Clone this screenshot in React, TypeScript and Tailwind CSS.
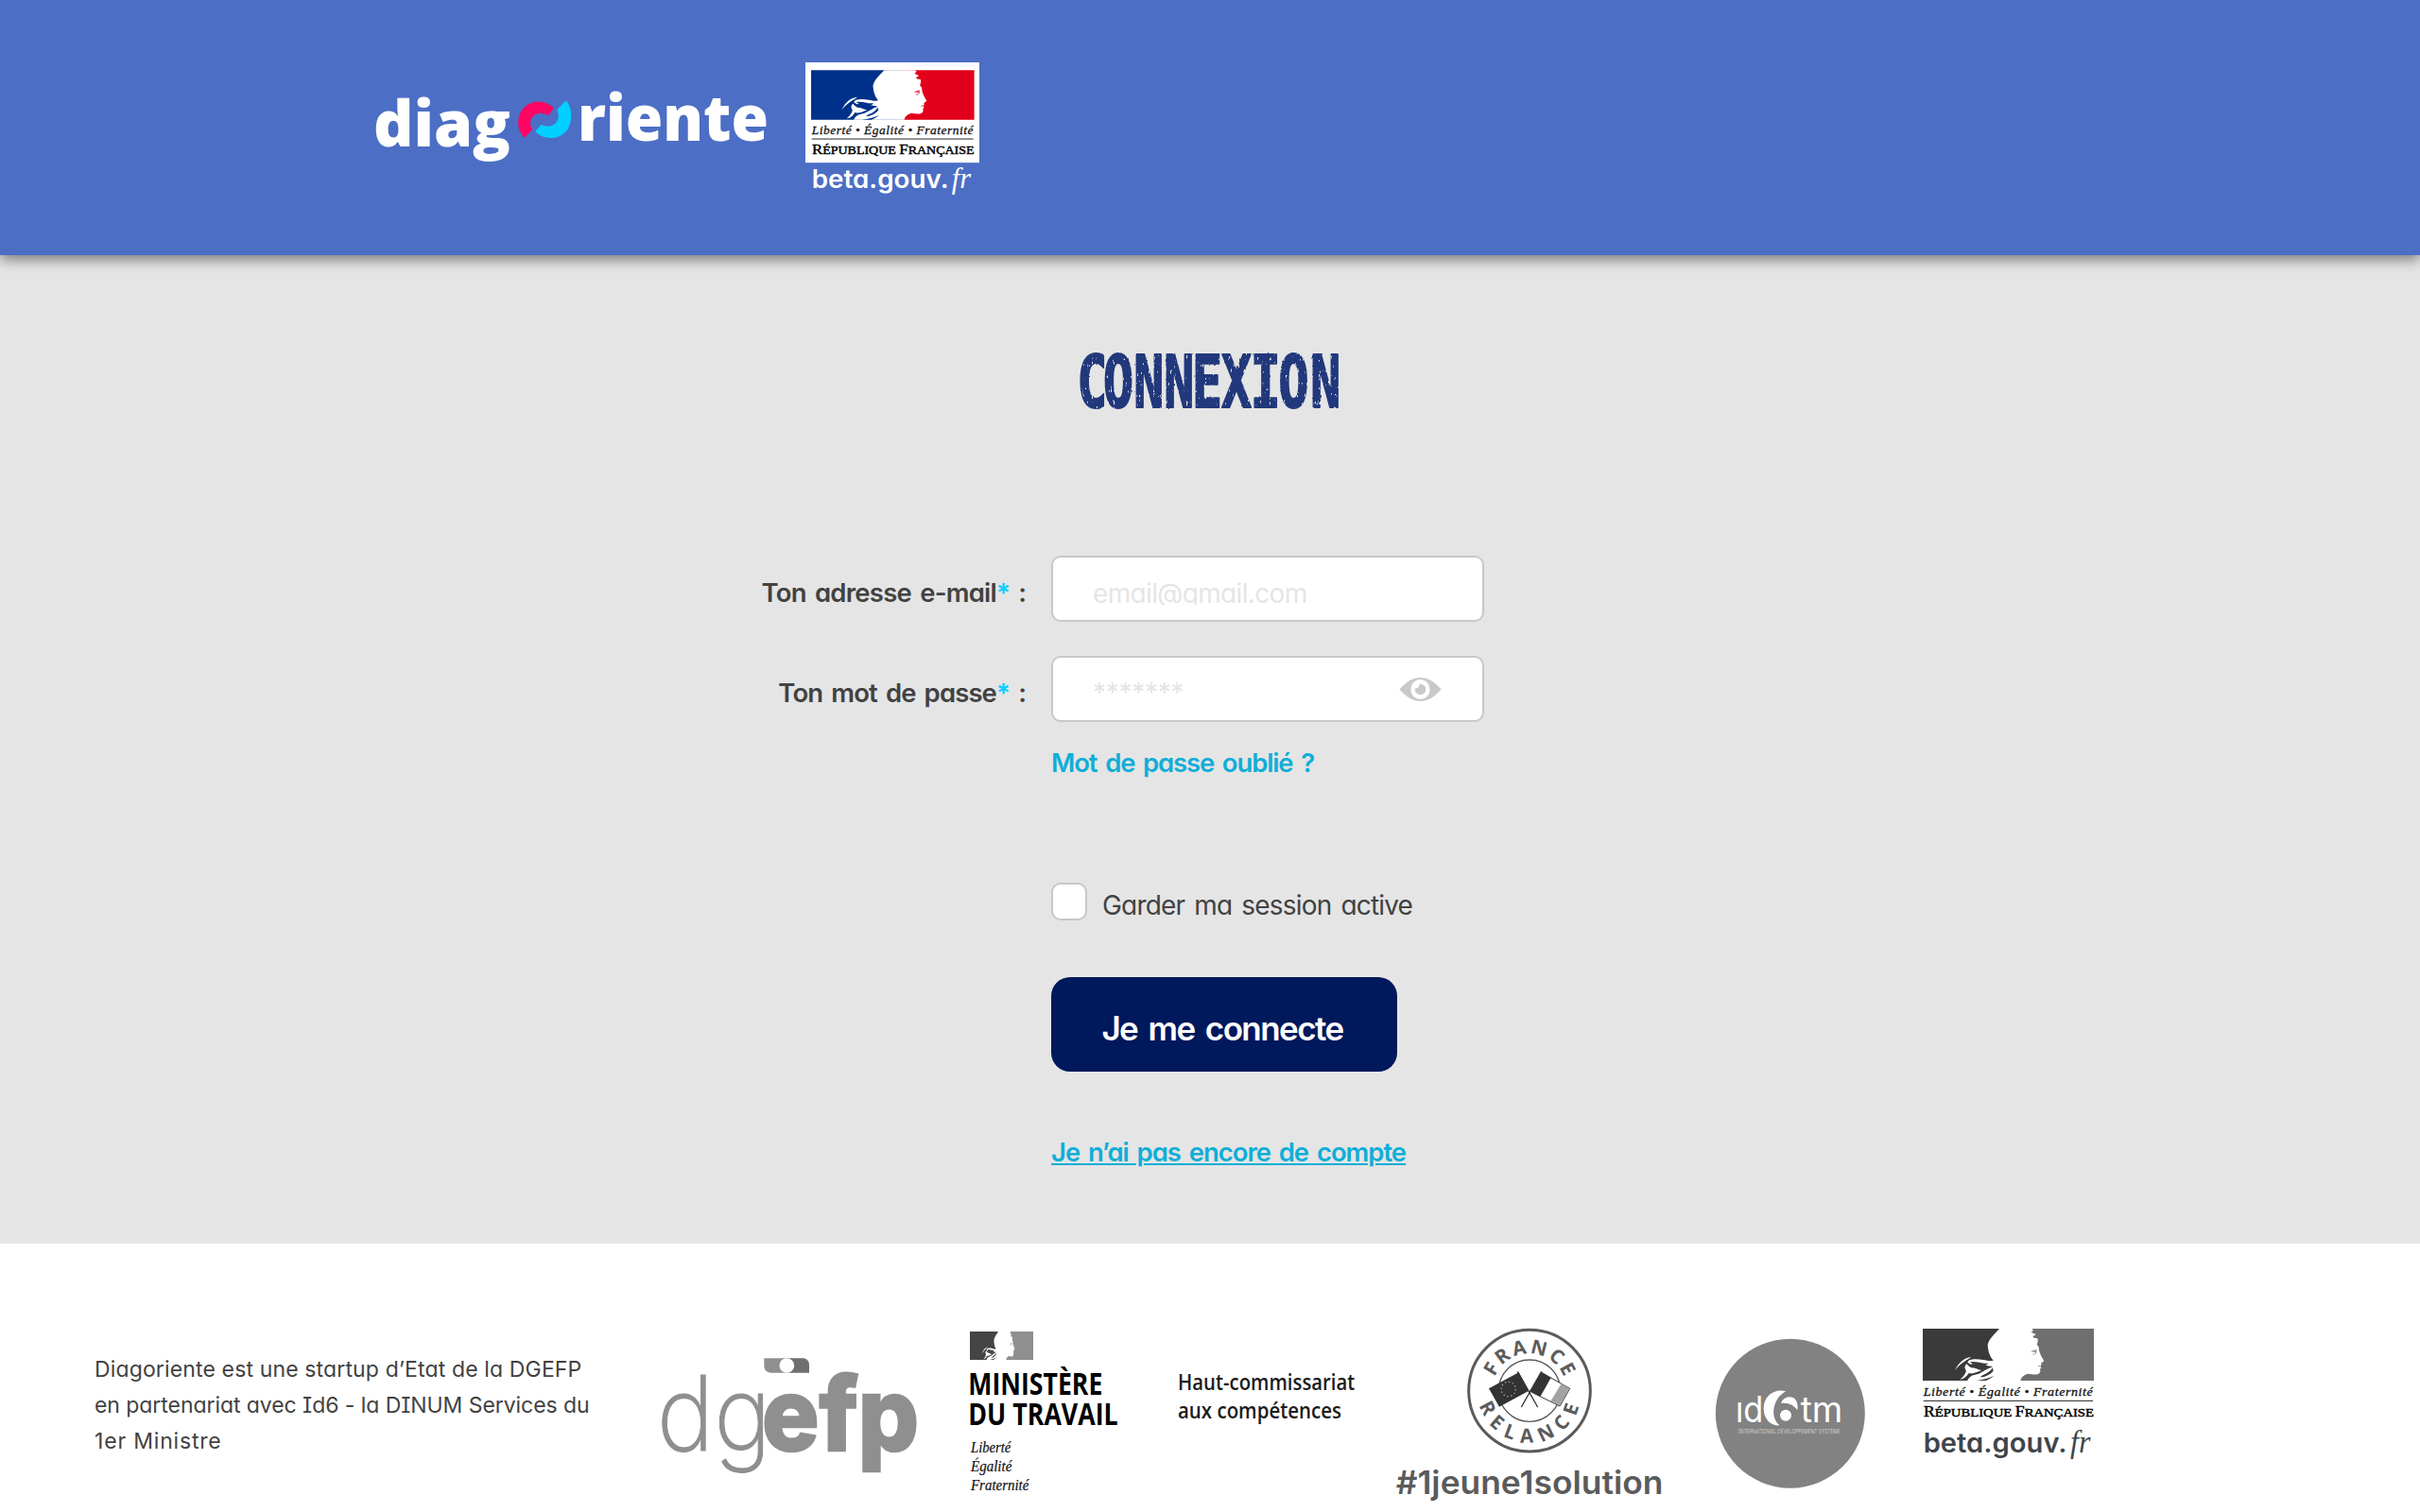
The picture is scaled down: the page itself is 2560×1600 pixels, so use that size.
import type { ReactNode } from "react";

const uiFont =
  "font-[Inter,'Noto_Sans',sans-serif] [font-feature-settings:'cv11','cv08']";

type FlagProps = { left: string; right: string };

/* Marianne profile over a two-tone flag, in a 543 x 165 box. */
function Marianne({ left, right }: FlagProps) {
  return (
    <g>
      <path d="M0 0H300V165H0Z" fill={left} />
      <path d="M300 0H543V165H300Z" fill={right} />
      <path
        d="M243 0C230 16 209 32 206 52C207 72 213 90 224 101C214 104 204 101 192 99C174 96 160 95 147 100L142 107L152 113C166 108 184 112 197 117C206 120 214 117 222 121C204 127 193 136 178 143L160 148C152 150 143 160 142 165H310C314 152 321 147 334 143C346 143 358 148 366 144C374 140 374 134 372 129L376 124L373 119L377 114L375 109C380 106 385 105 384 101C380 93 374 85 372 77C368 70 370 62 367 56L362 50C365 44 367 38 364 31L353 29L349 24L358 20L355 16L344 12L351 5L346 0Z"
        fill="#fff"
      />
      <path
        d="M154 90C132 92 115 106 102 132C112 120 120 112 128 107C136 101 146 96 154 90Z"
        fill="#fff"
      />
      <path
        d="M140 112C130 118 134 128 138 134C134 145 128 154 118 161C132 160 140 150 146 141C158 145 172 138 186 132C174 130 166 124 154 124C148 121 143 117 140 112Z"
        fill="#fff"
      />
      <path
        d="M150 106C170 102 186 112 208 110C200 118 190 124 178 124C166 116 158 112 150 106ZM222 124C214 136 204 143 190 148L182 154C198 154 214 146 224 134ZM170 165C188 163 208 158 226 150C216 158 208 162 200 165Z"
        fill={left}
      />
      <path
        d="M342 74C348 68 356 68 362 66L361 70C362 74 360 78 358 82L356 75C352 73 348 74 342 74ZM348 82L354 78L355 83Z"
        fill={right}
        opacity="0.75"
      />
      <path d="M366 118L376 118L367 121Z" fill={right} />
    </g>
  );
}

type GouvProps = {
  className: string;
  viewBox: string;
  left: string;
  right: string;
  beta: string;
  plate?: boolean;
};

function GouvLogo({ className, viewBox, left, right, beta, plate }: GouvProps) {
  return (
    <svg className={className} viewBox={viewBox}>
      {plate && <rect x="83" y="22" width="579" height="334" fill="#fff" />}
      <g transform="translate(102 48)">
        <Marianne left={left} right={right} />
      </g>
      <text
        x="104"
        y="261"
        textLength="539"
        lengthAdjust="spacingAndGlyphs"
        fontSize="38"
        letterSpacing="1.500"
        fill="#111"
        stroke="#111"
        strokeWidth="0.800"
        className="font-['Liberation_Serif',serif] italic"
      >
        Liberté • Égalité • Fraternité
      </text>
      <rect x="104" y="275.500" width="538" height="3" fill="#222" />
      <text
        x="105"
        y="328"
        textLength="540"
        lengthAdjust="spacingAndGlyphs"
        fontSize="48"
        fill="#000"
        stroke="#000"
        strokeWidth="1.400"
        className="font-['Liberation_Serif',serif]"
      >
        R<tspan fontSize="40">ÉPUBLIQUE </tspan>F
        <tspan fontSize="40">RANÇAISE</tspan>
      </text>
      <text
        x="104"
        y="440"
        textLength="456"
        lengthAdjust="spacingAndGlyphs"
        fontSize="84"
        fill={beta}
        className="font-[Inter,sans-serif] font-semibold [font-feature-settings:'cv11']"
      >
        beta.gouv.
      </text>
      <text
        x="570"
        y="440"
        textLength="64"
        lengthAdjust="spacingAndGlyphs"
        fontSize="98"
        fill={beta}
        className="font-['Liberation_Serif',serif] italic"
      >
        fr
      </text>
    </svg>
  );
}

function DiagorienteLogo() {
  return (
    <svg className="h-[90px] w-[430px] overflow-visible" viewBox="390 90 430 90">
      <g
        fill="#fff"
        fontSize="68"
        className="font-['Open_Sans','Noto_Sans',sans-serif] font-extrabold"
      >
        <text x="395" y="154.500" textLength="145" lengthAdjust="spacingAndGlyphs">
          diag
        </text>
        <text x="611" y="149" textLength="202" lengthAdjust="spacingAndGlyphs">
          riente
        </text>
      </g>
      <g transform="translate(540 96) scale(0.3333)">
        <path
          d="M45 150C20 125 18 85 38 60C62 30 105 25 138 55L120 79C100 65 75 70 66 90C61 103 63 113 70 122Z"
          fill="#ff0563"
        />
        <path
          d="M78 130L98 107C115 118 138 113 148 96C154 84 153 70 148 60L176 31C196 50 198 95 182 122C160 155 110 160 78 130Z"
          fill="#00cfff"
        />
      </g>
    </svg>
  );
}

function Title() {
  return (
    <h1 className="h-[68px]">
      <svg className="h-[68px] w-[280px] overflow-visible" viewBox="0 0 280 68">
        <defs>
          <filter id="brush" x="-5%" y="-20%" width="110%" height="140%">
            <feTurbulence
              type="fractalNoise"
              baseFrequency="0.4 0.15"
              numOctaves="3"
              seed="11"
              result="noise"
            />
            <feColorMatrix
              in="noise"
              type="matrix"
              values="0 0 0 0 0  0 0 0 0 0  0 0 0 0 0  0 0 0 12 -8.400"
              result="specks"
            />
            <feDisplacementMap
              in="SourceGraphic"
              in2="noise"
              scale="2"
              xChannelSelector="G"
              yChannelSelector="B"
              result="rough"
            />
            <feComposite in="rough" in2="specks" operator="out" />
          </filter>
        </defs>
        <g filter="url(#brush)">
          <text
            transform="scale(0.7 1)"
            x="-1 38.500 84.500 130.500 173 217 261 303.500 351.700"
            y="60.500"
            fontSize="76"
            fill="#21397c"
            stroke="#21397c"
            strokeWidth="2.200"
            strokeLinejoin="round"
            className="font-['DejaVu_Sans_Mono',monospace] font-bold"
          >
            CONNEXION
          </text>
        </g>
      </svg>
    </h1>
  );
}

function EyeIcon() {
  return (
    <svg className="h-[25px] w-[45px]" viewBox="0 0 46 26">
      <path d="M0 13C8 4 15 0 23 0S38 4 46 13C38 22 31 26 23 26S8 22 0 13Z" fill="#c9c9c9" />
      <ellipse cx="23" cy="13" rx="10.500" ry="11" fill="#fff" />
      <path d="M23 7A6 6 0 1 1 17 13C17 11.500 18.500 12.500 20.500 11C22 9.500 21.500 7 23 7Z" fill="#c9c9c9" />
    </svg>
  );
}

function Label({ className, children }: { className: string; children: ReactNode }) {
  return (
    <div className="-mr-px flex h-[70px] items-center justify-end pt-2.5 text-[27.500px] font-semibold whitespace-pre text-[#424242]">
      <span className={className}>{children}</span>
      <span className="w-[17px] text-[#00cfff]">*</span>
      <span className="w-[15px] text-right">:</span>
    </div>
  );
}

function DgefpLogo() {
  return (
    <svg className="h-[130px] w-[276px] overflow-visible" viewBox="54 138 828 390">
      <text
        x="44"
        y="436"
        textLength="364"
        lengthAdjust="spacingAndGlyphs"
        fontSize="328"
        fill="#8f8f8f"
        stroke="#8f8f8f"
        strokeWidth="3"
        className="font-[Inter,sans-serif] font-extralight"
      >
        dg
      </text>
      <text
        x="378"
        y="435"
        textLength="498"
        lengthAdjust="spacingAndGlyphs"
        fontSize="322"
        fill="#8f8f8f"
        stroke="#8f8f8f"
        strokeWidth="7"
        className="font-[Inter,sans-serif] font-extrabold"
      >
        efp
      </text>
      <path d="M385 142H457V188H408C394 188 385 180 385 166Z" fill="#8f8f8f" />
      <path d="M457 142H506C520 142 528 150 528 164V188H457Z" fill="#6f6f6f" />
      <circle cx="457" cy="165" r="23.500" fill="#fff" />
    </svg>
  );
}

function MinistereLogo() {
  return (
    <svg className="h-[180px] w-[160px] overflow-visible" viewBox="75 54 480 540">
      <g transform="translate(78 57) scale(0.3702 0.5455)">
        <Marianne left="#444" right="#8f8f8f" />
      </g>
      <g fill="#000" fontSize="95" className="font-['Open_Sans','Noto_Sans',sans-serif] font-bold">
        <text x="73" y="258" textLength="426" lengthAdjust="spacingAndGlyphs">
          MINISTÈRE
        </text>
        <text x="73" y="354" textLength="475" lengthAdjust="spacingAndGlyphs">
          DU TRAVAIL
        </text>
      </g>
      <g
        fill="#111"
        stroke="#111"
        strokeWidth="0.600"
        fontSize="52"
        className="font-['Liberation_Serif',serif] italic"
      >
        <text x="81" y="440" textLength="127" lengthAdjust="spacingAndGlyphs">
          Liberté
        </text>
        <text x="81" y="501" textLength="130" lengthAdjust="spacingAndGlyphs">
          Égalité
        </text>
        <text x="81" y="562" textLength="184" lengthAdjust="spacingAndGlyphs">
          Fraternité
        </text>
      </g>
    </svg>
  );
}

function HautCommissariat() {
  return (
    <svg className="h-[60px] w-[195px] overflow-visible" viewBox="735 180 585 180">
      <g fill="#1c1c1c" fontSize="68" className="font-['Open_Sans','Noto_Sans',sans-serif] font-semibold">
        <text x="738" y="243" textLength="562" lengthAdjust="spacingAndGlyphs">
          Haut-commissariat
        </text>
        <text x="738" y="332" textLength="519" lengthAdjust="spacingAndGlyphs">
          aux compétences
        </text>
      </g>
    </svg>
  );
}

function FranceRelance() {
  return (
    <svg className="h-[190px] w-[290px] overflow-visible" viewBox="42 42 870 570">
      <circle cx="474" cy="245" r="193" fill="none" stroke="#5b5b5b" strokeWidth="9" />
      <circle cx="474" cy="245" r="98" fill="none" stroke="#5b5b5b" strokeWidth="4" />
      <path id="arc-top" d="M356 245A118 118 0 0 1 592 245" fill="none" />
      <path id="arc-bottom" d="M309 245A165 165 0 0 0 639 245" fill="none" />
      <g
        fill="#5b5b5b"
        fontSize="62"
        textAnchor="middle"
        className="font-['Open_Sans','Noto_Sans',sans-serif] font-bold"
      >
        <text letterSpacing="8">
          <textPath href="#arc-top" startOffset="51%">
            FRANCE
          </textPath>
        </text>
        <text letterSpacing="24">
          <textPath href="#arc-bottom" startOffset="52%">
            RELANCE
          </textPath>
        </text>
      </g>
      <path d="M345 238L440 187L472 245L378 296Z" fill="#333" />
      <circle
        cx="407"
        cy="240"
        r="23"
        fill="none"
        stroke="#aaa"
        strokeWidth="4"
        strokeDasharray="4 8.040"
      />
      <path d="M512 187L602 238L570 294L476 247Z" fill="#fff" stroke="#333" strokeWidth="3" />
      <path d="M512 187L542 204L508 264L476 247Z" fill="#333" />
      <path d="M575 223L600 238L570 292L541 278Z" fill="#a3a3a3" />
      <path d="M436 184L500 297M512 184L448 297" stroke="#333" strokeWidth="4" />
      <text
        x="50"
        y="573"
        textLength="848"
        lengthAdjust="spacingAndGlyphs"
        fontSize="101"
        fill="#5b5b5b"
        className="font-[Inter,sans-serif] font-semibold"
      >
        #1jeune1solution
      </text>
    </svg>
  );
}

function Id6Logo() {
  return (
    <svg className="h-[160px] w-[160px]" viewBox="102 77 480 480">
      <circle cx="341.500" cy="316" r="237" fill="#828282" />
      <g fill="#fff" fontSize="114" className="font-[Inter,sans-serif]">
        <text x="168" y="345" textLength="88" lengthAdjust="spacingAndGlyphs">
          ıd
        </text>
        <text x="374" y="345" textLength="134" lengthAdjust="spacingAndGlyphs">
          tm
        </text>
      </g>
      <path
        d="M328 246C290 236 257 262 257 300C257 336 282 358 308 354C290 340 284 314 292 290C299 268 312 254 328 246Z"
        fill="#fff"
      />
      <path d="M312 284C318 266 336 260 350 266C362 272 367 286 364 306C354 290 334 280 312 284Z" fill="#fff" />
      <circle cx="327" cy="322" r="18" fill="#fff" />
      <text
        x="176"
        y="381"
        textLength="324"
        lengthAdjust="spacingAndGlyphs"
        fontSize="17"
        fill="#d0d0d0"
        className="font-[Inter,sans-serif]"
      >
        INTERNATIONAL DÉVELOPPEMENT SYSTÈME
      </text>
    </svg>
  );
}

export default function App() {
  return (
    <div className={`flex h-[1600px] w-[2560px] flex-col overflow-hidden bg-[#e5e5e5] ${uiFont}`}>
      <header className="z-10 flex h-[270px] shrink-0 items-start bg-[#4c6ec5] pl-[390px] shadow-[0_4px_14px_rgba(0,0,0,0.5)]">
        <div className="pt-[90px]">
          <DiagorienteLogo />
        </div>
        <div className="pt-[66px] pl-8">
          <GouvLogo
            className="h-[143px] w-[184px]"
            viewBox="83 22 579 450"
            left="#00318a"
            right="#e2001a"
            beta="#fff"
            plate
          />
        </div>
      </header>

      <main className="flex h-[1046px] shrink-0 flex-col pt-[100px]">
        <div className="flex justify-center">
          <Title />
        </div>
        <form className="mt-[150px] grid grid-cols-[1085px_458px] gap-x-[27px]">
          <Label className="tracking-[-0.760px] [word-spacing:3px]">Ton adresse e-mail</Label>
          <div className="flex h-[70px] items-start rounded-[10px] border-2 border-[#c8c8c8] bg-white px-[42px] pt-[26px]">
            <input
              className="h-6 w-full text-[28px] leading-6 tracking-[-0.650px] outline-none placeholder:text-[#e5e5e5]"
              placeholder="email@gmail.com"
            />
          </div>

          <div className="mt-9">
            <Label className="tracking-[-0.880px] [word-spacing:3px]">Ton mot de passe</Label>
          </div>
          <div className="mt-9 flex h-[70px] items-start rounded-[10px] border-2 border-[#c8c8c8] bg-white pr-[43px] pl-[42px]">
            <input
              type="password"
              className="mt-[25px] h-6 w-full text-[28px] leading-6 tracking-[-0.300px] outline-none placeholder:text-[#e5e5e5]"
              placeholder="*******"
            />
            <div className="mt-[21px] shrink-0">
              <EyeIcon />
            </div>
          </div>

          <div className="col-start-2 mt-[23px] flex flex-col items-start">
            <a className="text-[27.500px] leading-10 font-semibold tracking-[-1.150px] text-[#10aed8] [word-spacing:3px]">
              Mot de passe oublié ?
            </a>
            <label className="mt-[107px] flex h-10 items-start">
              <span className="h-10 w-[38px] rounded-[10px] border-2 border-[#c8c8c8] bg-white" />
              <span className="ml-4 pt-1 text-[28px] leading-10 tracking-[-0.820px] text-[#424242] [word-spacing:3px]">
                Garder ma session active
              </span>
            </label>
            <button
              type="button"
              className="mt-[60px] h-[100px] w-[366px] rounded-[20px] bg-[#00185c] pt-2 pr-1 text-[35px] font-semibold tracking-[-1.570px] text-white [word-spacing:4px]"
            >
              Je me connecte
            </button>
            <a className="mt-[65px] text-[27.500px] leading-10 font-semibold tracking-[-1.050px] text-[#10aed8] underline decoration-2 underline-offset-2 [word-spacing:3px]">
              Je n’ai pas encore de compte
            </a>
          </div>
        </form>
      </main>

      <footer className="flex grow items-start bg-white pl-[100px]">
        <p className="w-[598px] shrink-0 pt-[114px] text-[23px] leading-[38px] text-[#424242]">
          <span className="tracking-[0.140px]">Diagoriente est une startup d’Etat de la DGEFP</span>
          <br />
          <span className="tracking-[-0.060px]">en partenariat avec Id6 - la DINUM Services du</span>
          <br />
          <span className="tracking-[0.820px]">1er Ministre</span>
        </p>
        <div className="pt-[120px]">
          <DgefpLogo />
        </div>
        <div className="pt-[92px] pl-[51px]">
          <MinistereLogo />
        </div>
        <div className="pt-[134px] pl-[60px]">
          <HautCommissariat />
        </div>
        <div className="pt-[88px] pl-[34px]">
          <FranceRelance />
        </div>
        <div className="pt-[100px] pl-[50px]">
          <Id6Logo />
        </div>
        <div className="pt-[90px] pl-[60px]">
          <GouvLogo
            className="h-[141px] w-[182px]"
            viewBox="102 48 546 423"
            left="#3a3a3a"
            right="#6f6f6f"
            beta="#3f444b"
          />
        </div>
      </footer>
    </div>
  );
}
